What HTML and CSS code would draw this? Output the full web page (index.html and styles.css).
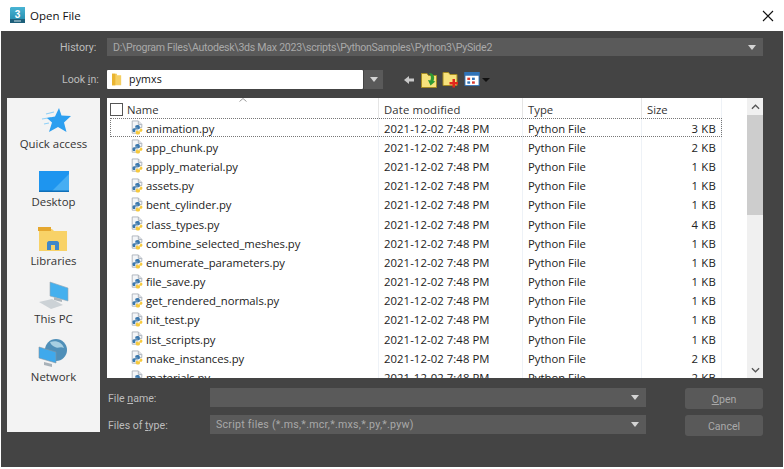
FILE: index.html
```html
<!DOCTYPE html>
<html lang="en">
<head>
<meta charset="utf-8">
<title>Open File</title>
<link rel="stylesheet" href="styles.css">
</head>
<body>
<svg class="defs" width="0" height="0">
  <symbol id="py" viewBox="0 0 16 16">
    <path d="M2.5 .5H9.5L13.5 4.5V8H8V14.5H2.5Z" fill="#f4f6f8" stroke="#a9b0b8"/>
    <path d="M9.5 .5V4.5H13.5" fill="#dfe3e8" stroke="#a9b0b8"/>
    <path d="M8.5 5C6.5 5 6 5.8 6 7V8.2H9V8.8H4.6C3.4 8.8 2.8 9.6 2.8 11S3.4 13.2 4.6 13.2H6V11.6C6 10.6 6.6 10 7.6 10H10C10.8 10 11.2 9.6 11.2 8.8V7C11.2 5.6 10.2 5 8.5 5Z" fill="#3b78ad"/>
    <path d="M11.6 9.1V10.4C11.6 11.2 11 11.6 10.2 11.6H7.8C7 11.6 6.6 12 6.6 12.7V14.2C6.6 15.4 7.6 16 9 16S11.4 15.4 11.4 14.2V13.2H8.8V12.8H12.6C13.6 12.8 14.2 12 14.2 11S13.6 9.1 12.6 9.1Z" fill="#f6c93e"/>
  </symbol>
</svg>
<div class="window">
  <header class="titlebar">
    <svg class="app-icon" viewBox="0 0 20 20" width="20" height="20" aria-hidden="true">
      <defs><linearGradient id="teal" x1="0" y1="0" x2="0" y2="1"><stop offset="0" stop-color="#48b4d4"/><stop offset="1" stop-color="#1f86a8"/></linearGradient></defs>
      <path d="M1 0H15V16H0V1Z" fill="url(#teal)"/>
      <rect x="0" y="12" width="15" height="4" fill="#1d5f7a"/>
      <rect x="4" y="13.500" width="7" height="1" fill="#c8dde6"/>
      <text x="7.500" y="10.500" class="app-icon-text">3</text>
    </svg>
    <span class="title">Open File</span>
    <svg class="close" viewBox="0 0 12 12" width="12" height="12" aria-hidden="true">
      <path d="M1 1L11 11M11 1L1 11" stroke="#111" stroke-width="1.1" fill="none"/>
    </svg>
  </header>
  <main class="dialog">
    <div class="top-row history-row">
      <label class="top-label">History:</label>
      <div class="combo history-combo">
        <span>D:\Program Files\Autodesk\3ds Max 2023\scripts\PythonSamples\Python3\PySide2</span>
        <i class="arrow"></i>
      </div>
    </div>
    <div class="top-row lookin-row">
      <label class="top-label">Look <u>i</u>n:</label>
      <div class="lookin-combo">
        <svg viewBox="0 0 12 16" width="10" height="15" aria-hidden="true">
          <path d="M0 1H6V3H11V15H0Z" fill="#f5cf63"/>
          <path d="M0 1H4V15H0Z" fill="#eab532"/>
        </svg>
        <span>pymxs</span>
      </div>
      <div class="lookin-drop"><i class="arrow"></i></div>
      <div class="tools">
        <svg class="tool-back" viewBox="0 0 10 10" width="10" height="10" aria-hidden="true"><path d="M0 5L5 1V3.5H10V6.5H5V9Z" fill="#c9c9c9"/></svg>
        <svg class="tool" viewBox="0 0 16 16" width="16" height="16" aria-hidden="true">
          <path d="M.5 1.500H6L7.500 3.500H15.500V15.500H.5Z" fill="#f7e27c" stroke="#a58b22"/>
          <path d="M8 1C12 1 14.500 4.500 12.500 9L14.300 9.500L9.500 13.500L7 8L9.300 8.500C10.500 6 10 3.500 8 1Z" fill="#2f9a35"/>
        </svg>
        <svg class="tool" viewBox="0 0 16 16" width="17" height="16" aria-hidden="true">
          <path d="M.5 .5H6L7.500 2.500H14.500V13.500H.5Z" fill="#f7e27c" stroke="#a58b22"/>
          <path d="M10 7H12.500V10H15.500V12.500H12.500V15.500H10V12.500H7V10H10Z" fill="#e0281c"/>
        </svg>
        <svg class="tool view" viewBox="0 0 16 16" width="16" height="15" aria-hidden="true">
          <rect x=".5" y=".5" width="15" height="14" fill="#fff" stroke="#2f73b8"/>
          <rect x="0" y="0" width="16" height="4" fill="#2f73b8"/>
          <rect x="3" y="6" width="3" height="2.500" fill="#d8392c"/>
          <rect x="8" y="6" width="3" height="2.500" fill="#2f73b8"/>
          <rect x="3" y="10" width="3" height="2.500" fill="#2f73b8"/>
          <rect x="8" y="10" width="3" height="2.500" fill="#d8392c"/>
        </svg>
        <i class="view-arrow"></i>
      </div>
    </div>
    <div class="content">
      <nav class="sidebar">
        <div class="place place-quick">
          <svg viewBox="0 0 30 26" width="30" height="26" aria-hidden="true">
            <path d="M5 6L13 4M1 11L10 9.500M3 16L8 15" stroke="#8fd0f7" stroke-width="1.200"/>
            <path d="M18 0L20.500 7.500L30 8L23 14.500L25.500 24L17 19L8 24L11 14.500L6 10L14 8.500Z" fill="#2c9ff0"/>
          </svg>
          <span>Quick access</span>
        </div>
        <div class="place">
          <svg viewBox="0 0 30 21" width="30" height="21" aria-hidden="true">
            <rect width="30" height="21" fill="#1e95ef"/>
            <path d="M12 21L30 3V21Z" fill="#47aef3"/>
            <rect y="19.500" width="30" height="1.500" fill="#0f6fb8"/>
          </svg>
          <span>Desktop</span>
        </div>
        <div class="place">
          <svg viewBox="0 0 30 25" width="30" height="25" aria-hidden="true">
            <path d="M1 3H14L16 5H29V25H1Z" fill="#f8d267"/>
            <path d="M0 1H13V5H0Z" fill="#e5a72f"/>
            <path d="M9 24V17C9 16 10 15 11 15H19C20 15 21 16 21 17V24H17V19H13V24Z" fill="#3f87c9"/>
          </svg>
          <span>Libraries</span>
        </div>
        <div class="place">
          <svg viewBox="0 0 30 28" width="30" height="28" aria-hidden="true">
            <path d="M11 1L29 7V20L11 15Z" fill="#45b0ee" stroke="#9aa7b1" stroke-width=".6"/>
            <path d="M15 16L23 18.500V21L15 19Z" fill="#aeb6bc"/>
            <path d="M0 21L13 18L24 24L12 28Z" fill="#ccd2d6"/>
          </svg>
          <span>This PC</span>
        </div>
        <div class="place">
          <svg viewBox="0 0 30 28" width="30" height="28" aria-hidden="true">
            <circle cx="18" cy="11" r="11" fill="#4f8fb8"/>
            <path d="M12 3C18 1 24 3 26 9C22 7 20 10 17 8C15 7 13 6 12 3Z" fill="#a7cfe2"/>
            <path d="M1 8L18 13V24L1 19Z" fill="#3fa9ec" stroke="#8795a0" stroke-width=".6"/>
            <path d="M6 23L14 25V28L6 26Z" fill="#a8b1b8"/>
          </svg>
          <span>Network</span>
        </div>
      </nav>
      <section class="right">
        <div class="list">
          <div class="files">
            <div class="head">
              <div class="cell-name"><i class="check"></i><span>Name</span>
                <svg class="sort" viewBox="0 0 8 4" width="8" height="4" aria-hidden="true"><path d="M.5 3.500L4 .5L7.500 3.500" fill="none" stroke="#9a9a9a"/></svg>
              </div>
              <div class="head-date">Date modified</div>
              <div>Type</div>
              <div>Size</div>
            </div>
            <div class="rows">
              <div class="row focus"><div class="cell-name"><svg class="py"><use href="#py"/></svg>animation.py</div><div class="date">2021-12-02 7:48 PM</div><div>Python File</div><div class="size">3 KB</div></div>
              <div class="row"><div class="cell-name"><svg class="py"><use href="#py"/></svg>app_chunk.py</div><div class="date">2021-12-02 7:48 PM</div><div>Python File</div><div class="size">2 KB</div></div>
              <div class="row"><div class="cell-name"><svg class="py"><use href="#py"/></svg>apply_material.py</div><div class="date">2021-12-02 7:48 PM</div><div>Python File</div><div class="size">1 KB</div></div>
              <div class="row"><div class="cell-name"><svg class="py"><use href="#py"/></svg>assets.py</div><div class="date">2021-12-02 7:48 PM</div><div>Python File</div><div class="size">1 KB</div></div>
              <div class="row"><div class="cell-name"><svg class="py"><use href="#py"/></svg>bent_cylinder.py</div><div class="date">2021-12-02 7:48 PM</div><div>Python File</div><div class="size">1 KB</div></div>
              <div class="row"><div class="cell-name"><svg class="py"><use href="#py"/></svg>class_types.py</div><div class="date">2021-12-02 7:48 PM</div><div>Python File</div><div class="size">4 KB</div></div>
              <div class="row"><div class="cell-name"><svg class="py"><use href="#py"/></svg>combine_selected_meshes.py</div><div class="date">2021-12-02 7:48 PM</div><div>Python File</div><div class="size">1 KB</div></div>
              <div class="row"><div class="cell-name"><svg class="py"><use href="#py"/></svg>enumerate_parameters.py</div><div class="date">2021-12-02 7:48 PM</div><div>Python File</div><div class="size">1 KB</div></div>
              <div class="row"><div class="cell-name"><svg class="py"><use href="#py"/></svg>file_save.py</div><div class="date">2021-12-02 7:48 PM</div><div>Python File</div><div class="size">1 KB</div></div>
              <div class="row"><div class="cell-name"><svg class="py"><use href="#py"/></svg>get_rendered_normals.py</div><div class="date">2021-12-02 7:48 PM</div><div>Python File</div><div class="size">1 KB</div></div>
              <div class="row"><div class="cell-name"><svg class="py"><use href="#py"/></svg>hit_test.py</div><div class="date">2021-12-02 7:48 PM</div><div>Python File</div><div class="size">1 KB</div></div>
              <div class="row"><div class="cell-name"><svg class="py"><use href="#py"/></svg>list_scripts.py</div><div class="date">2021-12-02 7:48 PM</div><div>Python File</div><div class="size">1 KB</div></div>
              <div class="row"><div class="cell-name"><svg class="py"><use href="#py"/></svg>make_instances.py</div><div class="date">2021-12-02 7:48 PM</div><div>Python File</div><div class="size">2 KB</div></div>
              <div class="row"><div class="cell-name"><svg class="py"><use href="#py"/></svg>materials.py</div><div class="date">2021-12-02 7:48 PM</div><div>Python File</div><div class="size">2 KB</div></div>
            </div>
          </div>
          <div class="scrollbar">
            <div class="scroll-btn"><svg viewBox="0 0 10 6" width="9" height="6" aria-hidden="true"><path d="M1 5L5 1L9 5" fill="none" stroke="#555" stroke-width="1.400"/></svg></div>
            <div class="scroll-track"><div class="scroll-thumb"></div></div>
            <div class="scroll-btn"><svg viewBox="0 0 10 6" width="9" height="6" aria-hidden="true"><path d="M1 1L5 5L9 1" fill="none" stroke="#555" stroke-width="1.400"/></svg></div>
          </div>
        </div>
        <div class="form">
          <div class="fields">
            <div class="field">
              <label>File <u>n</u>ame:</label>
              <div class="combo field-combo"><span></span><i class="arrow"></i></div>
            </div>
            <div class="field">
              <label>Files of <u>t</u>ype:</label>
              <div class="combo field-combo"><span>Script files (*.ms,*.mcr,*.mxs,*.py,*.pyw)</span><i class="arrow"></i></div>
            </div>
          </div>
          <div class="buttons">
            <button type="button" class="btn"><u>O</u>pen</button>
            <button type="button" class="btn">Cancel</button>
          </div>
        </div>
      </section>
    </div>
  </main>
</div>
</body>
</html>
```
FILE: styles.css
```css
* { box-sizing: border-box; }
html, body { margin: 0; height: 100%; }
body {
  background: #fff;
  font-family: "Open Sans", "Noto Sans", sans-serif;
  font-size: 11.3px;
  overflow: hidden;
}
.defs { display: block; height: 0; }
.window { width: 784px; height: 469px; display: flex; flex-direction: column; padding: 0 1px 2px; }
.titlebar { height: 31px; flex: none; display: flex; align-items: center; padding: 0 10px 0 9px; background: #fff; }
.app-icon { flex: none; margin-top: 3px; }
.app-icon-text { font: bold 10px "Liberation Sans", sans-serif; fill: #fff; text-anchor: middle; }
.title { font-size: 11.5px; color: #111; flex: 1; }
.close { flex: none; margin-right: -1px; }
.dialog { flex: 1; background: #444; padding: 7px 20px 0 6px; display: flex; flex-direction: column; color: #c8c8c8; }
.top-row { display: flex; align-items: center; }
.history-row { height: 18px; }
.lookin-row { height: 20px; margin-top: 13px; }
.top-label { width: 100px; padding-left: 53px; flex: none; font-family: Roboto, sans-serif; font-size: 10.6px; white-space: nowrap; color: #bdbdbd; }
.lookin-row .top-label { padding-left: 55px; }
u { text-underline-offset: 1px; }
.combo { display: flex; align-items: center; justify-content: space-between; background: #5a5a5a; color: #a9a9a9; padding: 0 7px 0 6px; font-family: Roboto, sans-serif; font-size: 10.6px; }
.history-combo { flex: 1; height: 18px; letter-spacing: -.27px; }
.arrow { display: block; width: 0; height: 0; border-left: 4px solid transparent; border-right: 4px solid transparent; border-top: 5px solid #d4d4d4; }
.lookin-combo { width: 256px; height: 19px; background: #fff; border-radius: 1px; display: flex; align-items: center; padding-left: 5px; gap: 7px; color: #111; font-size: 10.6px; }
.lookin-combo span { letter-spacing: .15px; }
.lookin-drop { width: 19px; height: 19px; margin-left: 1px; background: #5a5a5a; display: flex; align-items: center; justify-content: center; }
.tools { display: flex; align-items: center; margin-left: 21px; padding-top: 1px; }
.tool-back { margin-right: 7px; }
.tool { margin-right: 5px; }
.tool.view { margin-right: 2px; }
.view-arrow { width: 0; height: 0; border-left: 4px solid transparent; border-right: 4px solid transparent; border-top: 4px solid #111; }
.content { flex: 1; display: flex; margin-top: 9px; min-height: 0; }
.sidebar { width: 93px; height: 334px; flex: none; background: #f3f3f3; color: #333; display: flex; flex-direction: column; align-items: center; padding-top: 9px; font-size: 11.4px; }
.place { height: 58.3px; display: flex; flex-direction: column; align-items: center; justify-content: flex-end; gap: 2px; padding-bottom: 2px; }
.place-quick { height: 47px; }
.place-quick svg { margin-left: 5px; }
.place span { line-height: 16px; white-space: nowrap; }
.right { flex: 1; display: flex; flex-direction: column; margin-left: 7px; min-width: 0; }
.list { height: 280px; flex: none; display: flex; background: #fff; color: #222; overflow: hidden; }
.files { flex: 1; min-width: 0; }
.head, .row { display: grid; grid-template-columns: 272px 144px 119px 80px; }
.head { height: 20px; align-items: center; color: #333; }
.head > div { height: 20px; display: flex; align-items: center; padding: 2px 0 0 5px; border-right: 1px solid #e5e5e5; position: relative; }
.head > div:last-child { border-right: 1px solid #eef2f7; }
.head > .head-date { letter-spacing: .15px; }
.head .cell-name { padding-left: 3px; gap: 4px; }
.check { display: block; width: 13px; height: 13px; border: 1px solid #555; background: #fff; flex: none; }
.sort { position: absolute; left: 132px; top: 0; }
.rows { height: 260px; overflow: hidden; background: linear-gradient(90deg, transparent 271px, #eef2f7 271px, #eef2f7 272px, transparent 272px, transparent 415px, #eef2f7 415px, #eef2f7 416px, transparent 416px, transparent 534px, #eef2f7 534px, #eef2f7 535px, transparent 535px, transparent 614px, #eef2f7 614px, #eef2f7 615px, transparent 615px); }
.row { height: 19.2px; align-items: center; white-space: nowrap; padding-left: 3px; width: 615px; grid-template-columns: 269px 144px 119px 80px; }
.row > div { padding: 1px 0 0 5px; display: flex; align-items: center; height: 19px; }
.row > .date { letter-spacing: .08px; }
.row.focus { outline: 1px dotted #777; outline-offset: -1px; margin-left: 3px; padding-left: 0; width: 612px; }
.row > .cell-name { padding-left: 20px; gap: 2px; letter-spacing: -.05px; }
.py { width: 14px; height: 15px; flex: none; margin-top: -1px; }
.row > .size { justify-content: flex-end; padding-right: 6px; letter-spacing: .2px; }
.scrollbar { width: 16px; flex: none; background: #f0f0f0; display: flex; flex-direction: column; }
.scroll-btn { height: 17px; flex: none; display: flex; align-items: center; justify-content: center; }
.scroll-track { flex: 1; }
.scroll-thumb { height: 100px; background: #cdcdcd; }
.form { display: flex; margin-top: 10px; }
.fields { width: 539px; flex: none; display: flex; flex-direction: column; gap: 8px; }
.field { display: flex; align-items: center; height: 19px; font-family: Roboto, sans-serif; font-size: 10.6px; color: #bdbdbd; }
.field label { width: 103px; flex: none; padding: 1px 0 0 1px; }
.field-combo { flex: 1; height: 19px; padding-left: 6px; letter-spacing: .26px; }
.buttons { margin-left: 39px; flex: 1; display: flex; flex-direction: column; gap: 6px; }
.btn { height: 21px; width: 78px; border: 0; border-radius: 3px; background: #595959; color: #a9a9a9; font-family: Roboto, sans-serif; font-size: 10.6px; padding: 1px 0 0; }
```
